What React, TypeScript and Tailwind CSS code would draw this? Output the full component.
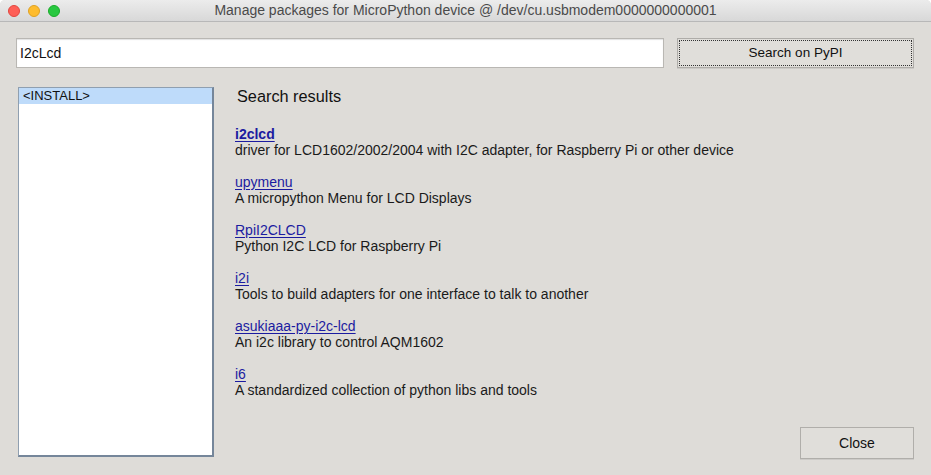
const results = [
  { name: "i2clcd", desc: "driver for LCD1602/2002/2004 with I2C adapter, for Raspberry Pi or other device", bold: true },
  { name: "upymenu", desc: "A micropython Menu for LCD Displays" },
  { name: "RpiI2CLCD", desc: "Python I2C LCD for Raspberry Pi" },
  { name: "i2i", desc: "Tools to build adapters for one interface to talk to another" },
  { name: "asukiaaa-py-i2c-lcd", desc: "An i2c library to control AQM1602" },
  { name: "i6", desc: "A standardized collection of python libs and tools" },
]

function TitleBar() {
  return (
    <div className="relative h-[22px] shrink-0 flex items-center justify-center bg-gradient-to-b from-[#ececec] to-[#d8d8d8] border-b border-[#b8b8b8]">
      <div className="absolute left-[8px] top-[5px] flex gap-[8px]">
        <span className="size-[12px] rounded-full bg-[#fe5f57] border border-[#e1463f]"></span>
        <span className="size-[12px] rounded-full bg-[#febc2e] border border-[#dea123]"></span>
        <span className="size-[12px] rounded-full bg-[#28c840] border border-[#1aab29]"></span>
      </div>
      <span className="text-[14px] text-[#4a4a4a]">Manage packages for MicroPython device @ /dev/cu.usbmodem0000000000001</span>
    </div>
  )
}

export default function App() {
  return (
    <div className="w-[931px] h-[475px] flex flex-col bg-[#dedcd8] overflow-hidden rounded-t-[5px] font-['Liberation_Sans',Arial,sans-serif]">
      <TitleBar />

      <div className="flex-1 flex flex-col pl-[16px] pr-[17px] pt-[16px] pb-[16px]">
        <div className="flex gap-[13px] h-[30px]">
          <div className="flex-1 flex items-center bg-white border border-[#b9b7b3] shadow-[inset_0_1px_1px_rgba(0,0,0,0.12)] px-[3px]">
            <span className="text-[14px] text-[#111]">I2cLcd</span>
          </div>
          <button className="w-[237px] bg-[#e0deda] border border-[#aeaca8] p-[1px] shadow-[0_1px_0_rgba(0,0,0,0.08)]">
            <div className="h-full flex items-center justify-center border border-dotted border-[#333]">
              <span className="text-[13.5px] text-[#111]">Search on PyPI</span>
            </div>
          </button>
        </div>

        <div className="flex-1 flex mt-[19px]">
          <div className="w-[196px] ml-[2px] h-[370px] bg-white border-2 border-[#75869a] border-l border-t border-l-[#8f9fb0] border-t-[#8f9fb0]">
            <div className="h-[16px] flex items-center bg-[#bedbfa] pl-[4px]">
              <span className="text-[13px] text-[#111]">&lt;INSTALL&gt;</span>
            </div>
          </div>

          <div className="flex-1 flex flex-col pl-[21px]">
            <h2 className="text-[16.3px] text-[#111] ml-[2px] leading-[20px] mt-[-1px]">Search results</h2>
            <div className="flex flex-col gap-[16px] mt-[20px]">
              {results.map((r) => (
                <div key={r.name} className="flex flex-col">
                  <a className={`text-[14px] leading-[16px] text-[#1b1ba0] underline underline-offset-2 self-start ${r.bold ? "font-bold" : ""}`}>
                    {r.name}
                  </a>
                  <span className="text-[14px] leading-[16px] text-[#1a1a1a]">{r.desc}</span>
                </div>
              ))}
            </div>
            <div className="flex-1"></div>
            <div className="flex justify-end">
              <button className="w-[114px] h-[32px] bg-[#e0deda] border border-[#b0aeaa] flex items-center justify-center shadow-[0_1px_0_rgba(0,0,0,0.08)]">
                <span className="text-[14px] text-[#111]">Close</span>
              </button>
            </div>
          </div>
        </div>
      </div>
    </div>
  )
}
